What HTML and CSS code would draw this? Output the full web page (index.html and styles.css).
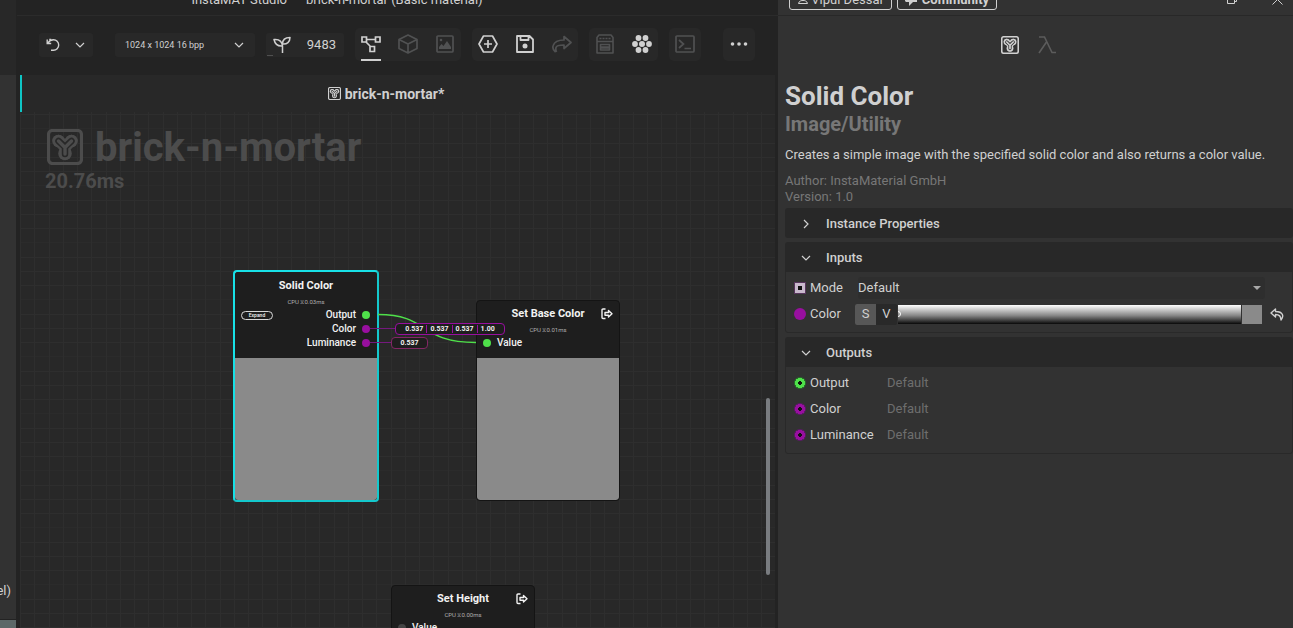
FILE: index.html
```html
<!DOCTYPE html>
<html lang="en">
<head>
<meta charset="utf-8">
<title>InstaMAT Studio</title>
<link rel="stylesheet" href="styles.css">
</head>
<body>
<svg class="defs" aria-hidden="true">
  <symbol id="logo" viewBox="0 0 36 36">
    <rect x="1.500" y="1.500" width="33" height="33" rx="4" fill="none" stroke="currentColor" stroke-width="3.200"/>
    <g fill="none" stroke-linecap="round" stroke-linejoin="round">
      <path d="M11.500 11.500L18 18L24.500 11.500M18 18V25" stroke="currentColor" stroke-width="11.500"/>
      <circle cx="11.500" cy="12" r="6.300" fill="currentColor"/>
      <circle cx="24.500" cy="12" r="6.300" fill="currentColor"/>
      <circle cx="18" cy="24.500" r="6.800" fill="currentColor"/>
      <path class="logo-gap" d="M11.500 12L18 18L24.500 12M18 18V25" stroke-width="6.500"/>
      <path d="M11.500 12L18 18.500L24.500 12M18 18V25" stroke="currentColor" stroke-width="3.400"/>
    </g>
  </symbol>
  <symbol id="chevron" viewBox="0 0 10 6"><path d="M1 1l4 4 4-4" fill="none" stroke="currentColor" stroke-width="1.200"/></symbol>
  <symbol id="export" viewBox="0 0 12 12"><path d="M4.500 1H2Q1 1 1 2v7.500q0 1 1 1h2.500M4 4.500h3.500V2.500L11 5.800 7.500 9V7.200H4z" fill="none" stroke="currentColor" stroke-width="1.400" stroke-linejoin="round"/></symbol>
</svg>
<div class="app">
  <aside class="side">
    <div class="side-top"></div>
    <div class="side-list"><span>(Pixel)</span></div>
    <div class="side-foot"></div>
  </aside>

  <main class="workspace">
    <header class="titlebar"><span>InstaMAT Studio</span><span>brick-n-mortar (Basic material)</span></header>
    <div class="toolbar">
      <div class="field undo">
        <button class="plain" aria-label="Undo"><svg width="14" height="14" viewBox="0 0 14 14" fill="none" stroke="currentColor" stroke-width="1.400"><path d="M1.200 1.500v4h4M5.200 1.500h-2M2 5C3.500 2.500 5 1.800 7.500 1.800a5.200 5.200 0 0 1 0 10.400H5"/></svg></button>
        <button class="plain" aria-label="Undo history"><svg width="10" height="6"><use href="#chevron"/></svg></button>
      </div>
      <button class="field resolution"><span>1024 x 1024 16 bpp</span><svg width="10" height="6"><use href="#chevron"/></svg></button>
      <label class="field seed">
        <svg width="18" height="18" viewBox="0 0 18 18" fill="none" stroke="currentColor" stroke-width="1.500" stroke-linejoin="round"><path d="M9.500 17V9.500M9.500 10C5 10.500 2 8 1 3.500 6 3 9 5.500 9.500 10zM9.500 8c0-4 2.500-6.500 7.500-6.500C17 6 14 8.500 9.500 8z"/></svg>
        <input value="9483" aria-label="Random seed">
      </label>
      <div class="group">
        <button class="tool active" aria-label="Graph"><svg width="20" height="18" viewBox="0 0 20 18" fill="none" stroke="currentColor" stroke-width="1.700"><path d="M1 2h4.500v5H1zM14.500 2H19v5h-4.500zM9 11.500h4.500v5H9zM5.500 4.500h9M5 7l5 5"/></svg></button>
        <button class="tool off" aria-label="3D view"><svg width="20" height="20" viewBox="0 0 20 20" fill="none" stroke="currentColor" stroke-width="1.700" stroke-linejoin="round"><path d="M10 1l9 4.500v9L10 19l-9-4.500v-9zM1 5.500L10 10l9-4.500M10 10v9"/></svg></button>
        <button class="tool off" aria-label="Image view"><svg width="18" height="18" viewBox="0 0 18 18" fill="none" stroke="currentColor" stroke-width="1.700"><rect x="1" y="1" width="16" height="16" rx="1"/><path d="M3 14v-2l2.500-3 2 2L11 6l4 6v2z" fill="currentColor" stroke="none"/><circle cx="5" cy="5" r="1.300" fill="currentColor" stroke="none"/></svg></button>
      </div>
      <div class="group">
        <button class="tool" aria-label="Add node"><svg width="20" height="18" viewBox="0 0 20 18" fill="none" stroke="currentColor" stroke-width="1.700" stroke-linejoin="round"><path d="M5.500 1h9L19 9l-4.500 8h-9L1 9zM10 5v8M6 9h8"/></svg></button>
        <button class="tool" aria-label="Save"><svg width="18" height="18" viewBox="0 0 18 18" fill="none" stroke="currentColor" stroke-width="1.800" stroke-linejoin="round"><path d="M1 1h12.500L17 4.500V17H1zM4.500 1v4h8V1"/><circle cx="9" cy="11" r="2.500" fill="currentColor" stroke="none"/></svg></button>
        <button class="tool off" aria-label="Share"><svg width="20" height="18" viewBox="0 0 20 18" fill="none" stroke="currentColor" stroke-width="1.700" stroke-linejoin="round"><path d="M3.500 17C1 15 .5 12.500 1.200 10.500 2.500 6.500 6 5 12 5V1.500L19 7.500l-7 6V10C7 10 4.500 10.500 4 12.500c-.5 2 0 3.500.5 4.500"/></svg></button>
      </div>
      <div class="group">
        <button class="tool off" aria-label="Library"><svg width="18" height="20" viewBox="0 0 18 20" fill="none" stroke="currentColor" stroke-width="1.600" stroke-linejoin="round"><path d="M1 19V3.500L3 1h12l2 2.500V19zM1 7.500h16"/><path d="M3.500 4.500h11" stroke-dasharray="2 1"/><rect x="4.500" y="10.500" width="9" height="5.500"/><path d="M5 13.500h8" stroke-width="2.500"/></svg></button>
        <button class="tool" aria-label="Color nodes"><svg width="20" height="18" viewBox="0 0 20 18" fill="currentColor"><circle cx="6.500" cy="3" r="2.900"/><circle cx="13.500" cy="3" r="2.900"/><circle cx="3" cy="9" r="2.900"/><circle cx="10" cy="9" r="3"/><circle cx="17" cy="9" r="2.900"/><circle cx="6.500" cy="15" r="2.900"/><circle cx="13.500" cy="15" r="2.900"/></svg></button>
      </div>
      <div class="group">
        <button class="tool off" aria-label="Console"><svg width="20" height="18" viewBox="0 0 20 18" fill="none" stroke="currentColor" stroke-width="1.700"><rect x="1" y="1" width="18" height="16" rx="1"/><path d="M4 5l4.500 4L4 13M9.500 13.500H16"/></svg></button>
      </div>
      <div class="group more">
        <button class="tool" aria-label="More"><svg width="18" height="4" viewBox="0 0 18 4" fill="currentColor"><circle cx="2.500" cy="2" r="1.800"/><circle cx="9" cy="2" r="1.800"/><circle cx="15.500" cy="2" r="1.800"/></svg></button>
      </div>
    </div>
    <div class="tab"><svg class="on-tab" width="13" height="13"><use href="#logo"/></svg><span>brick-n-mortar*</span></div>

    <section class="canvas">
      <div class="project">
        <h1><svg class="on-canvas" width="36" height="36"><use href="#logo"/></svg><span>brick-n-mortar</span></h1>
        <p>20.76ms</p>
      </div>

      <article class="node selected n-solid">
        <h2>Solid Color</h2>
        <p class="cpu">CPU ⧖0.03ms</p>
        <div class="ports">
          <button class="expand">Expand</button>
          <ul class="out">
            <li>Output<i class="pin green"></i></li>
            <li>Color<i class="pin"></i></li>
            <li>Luminance<i class="pin"></i></li>
          </ul>
        </div>
        <div class="preview"></div>
      </article>

      <article class="node n-base">
        <h2>Set Base Color</h2>
        <svg class="export" width="12" height="12"><use href="#export"/></svg>
        <p class="cpu">CPU ⧖0.01ms</p>
        <ul class="in"><li><i class="pin green"></i>Value</li></ul>
        <div class="preview"></div>
      </article>

      <article class="node n-height">
        <h2>Set Height</h2>
        <svg class="export" width="12" height="12"><use href="#export"/></svg>
        <p class="cpu">CPU ⧖0.00ms</p>
        <ul class="in"><li><i class="pin idle"></i>Value</li></ul>
      </article>

      <svg class="wires" width="140" height="50" viewBox="0 0 140 50" fill="none">
        <path d="M0 18.500H26M0 32.500H22" stroke="#75197e"/>
        <path d="M8 4.500C60 4.500 48 32.500 106 32.500" stroke="#4fe04a" stroke-width="1.500"/>
      </svg>
      <div class="value v-color"><span>0.537</span><span>0.537</span><span>0.537</span><span>1.00</span></div>
      <div class="value v-lum"><span>0.537</span></div>
      <div class="scroll-thumb"></div>
    </section>
  </main>

  <aside class="inspector">
    <header class="account">
      <button><svg width="10" height="9" viewBox="0 0 10 9" fill="none" stroke="currentColor"><circle cx="5" cy="3" r="2.500"/><path d="M.5 8.500C1 6 3 5.500 5 5.500s4 .5 4.500 3z"/></svg>Vipul Dessai</button>
      <button class="community"><svg width="12" height="12" viewBox="0 0 12 12" fill="currentColor"><path d="M1 0h10a1 1 0 0 1 1 1v7H8l-4 4V8H1L0 7V1z"/></svg>Community</button>
      <span class="window-controls">
        <svg width="10" height="10" viewBox="0 0 10 10" fill="none" stroke="currentColor"><path d="M.5 2.500h7v7h-7zM2.500 2.500v-2h7v7h-2"/></svg>
        <svg width="11" height="11" viewBox="0 0 11 11" fill="none" stroke="currentColor"><path d="M.5.5l10 10M10.500.5l-10 10"/></svg>
      </span>
    </header>
    <nav class="modes">
      <button class="plain" aria-label="Graph properties"><svg class="on-panel" width="18" height="18"><use href="#logo"/></svg></button>
      <button class="plain dim" aria-label="Functions"><svg width="18" height="18" viewBox="0 0 18 18" fill="none" stroke="currentColor" stroke-width="1.600"><path d="M1 1h5.500L14 16.500h4M8.500 6L1 17"/></svg></button>
    </nav>
    <div class="about">
      <h2>Solid Color</h2>
      <h3>Image/Utility</h3>
      <p>Creates a simple image with the specified solid color and also returns a color value.</p>
      <p class="meta">Author: InstaMaterial GmbH<br>Version: 1.0</p>
    </div>
    <section class="card">
      <button class="card-head closed"><svg width="10" height="6"><use href="#chevron"/></svg>Instance Properties</button>
    </section>
    <section class="card">
      <button class="card-head"><svg width="10" height="6"><use href="#chevron"/></svg>Inputs</button>
      <div class="card-body inputs">
        <div class="row mode">
          <i class="square"></i><label for="mode">Mode</label>
          <div class="select">
            <select id="mode"><option>Default</option></select>
            <svg width="8" height="4" viewBox="0 0 8 4"><path d="M0 0h8L4 4z" fill="#a8a8a8"/></svg>
          </div>
        </div>
        <div class="row">
          <i class="port solid"></i><span class="label">Color</span>
          <div class="toggle"><button class="on">S</button><button>V</button></div>
          <div class="ramp"><i></i></div>
          <div class="swatch"></div>
          <button class="plain reset" aria-label="Reset"><svg width="14" height="13" viewBox="0 0 14 13" fill="none" stroke="currentColor" stroke-width="1.400" stroke-linejoin="round"><path d="M5.500 1L1 5l4.500 4V6.500C9 6.500 11 7.500 11 12c3-3.500 2.500-8.500-5.500-8.500z"/></svg></button>
        </div>
      </div>
    </section>
    <section class="card">
      <button class="card-head"><svg width="10" height="6"><use href="#chevron"/></svg>Outputs</button>
      <div class="card-body">
        <div class="row"><i class="port green"></i><span class="label wide">Output</span><span class="default">Default</span></div>
        <div class="row"><i class="port"></i><span class="label wide">Color</span><span class="default">Default</span></div>
        <div class="row"><i class="port"></i><span class="label wide">Luminance</span><span class="default">Default</span></div>
      </div>
    </section>
  </aside>
</div>
</body>
</html>
```
FILE: styles.css
```css
* { box-sizing: border-box; }
body { margin: 0; background: #232323; color: #d0d0d0; font: 13px/16px Roboto, "Noto Sans", sans-serif; overflow: hidden; }
h1, h2, h3, p, ul { margin: 0; padding: 0; list-style: none; }
button, input, select { font: inherit; color: inherit; background: none; border: 0; padding: 0; margin: 0; }
svg { display: block; flex: none; }
.defs { position: absolute; width: 0; height: 0; }
.plain { display: flex; align-items: center; justify-content: center; }
.app { display: flex; height: 100vh; }

.side { width: 16px; display: flex; flex-direction: column; margin-right: 1px; }
.side-top { height: 75px; background: #282828; }
.side-list { flex: 1; background: #323232; display: flex; align-items: flex-end; justify-content: flex-end; padding: 0 5px 20px 0; overflow: hidden; }
.side-foot { height: 8px; margin-top: 1px; background: #5c6868; }

.workspace { flex: 1; min-width: 0; display: flex; flex-direction: column; }
.titlebar { height: 16px; border-bottom: 1px solid #2b2b2b; padding: 0 121px 7px 0; display: flex; gap: 19px; align-items: flex-end; justify-content: center; overflow: hidden; }
.toolbar { height: 59px; padding: 0 22px 2px; display: flex; align-items: center; gap: 11px; }
.field { height: 24px; background: #282828; border-radius: 3px; display: flex; align-items: center; }
.undo { width: 54px; padding: 0 8px 0 7px; justify-content: space-between; margin-right: 11px; }
.resolution { width: 140px; padding: 0 11px 0 10px; justify-content: space-between; font-size: 9px; }
.seed { width: 78px; padding: 0 8px 0 7px; justify-content: space-between; background: linear-gradient(#505050, #505050) 1px 22px / 6px 1px no-repeat #282828; }
.seed input { width: 30px; text-align: right; }
.group { height: 33px; background: #282828; border-radius: 5px; display: flex; gap: 5px; }
.more { margin-left: 11px; }
.tool { width: 32px; height: 33px; display: flex; align-items: center; justify-content: center; border-bottom: 2px solid transparent; }
.tool.active { background: linear-gradient(#d0d0d0, #d0d0d0) 6px 31px / 20px 2px no-repeat border-box; }
.tool.off { color: #505152; }
.tab { height: 37px; margin: 0 3px; background: #282828; border-left: 2px solid #0ec5c5; display: flex; align-items: center; justify-content: center; gap: 4px; font-size: 14px; font-weight: 700; padding-right: 25px; }
.on-tab, .on-canvas { --gap: #282828; }
.on-panel { --gap: #323232; }
.logo-gap { stroke: var(--gap); }

.canvas { flex: 1; position: relative; overflow: hidden; margin: 0 3px; background-color: #282828;
  background-image:
    linear-gradient(90deg, #2e2e2e 1px, #0000 1px 14px, #2e2e2e 14px 15px, #0000 15px 29px, #2e2e2e 29px 30px, #0000 30px 43px, #2e2e2e 43px 44px, #0000 44px),
    linear-gradient(#2e2e2e 1px, #0000 1px 14px, #2b2b2b 14px 15px, #0000 15px 29px, #2e2e2e 29px 30px, #0000 30px 43px, #2e2e2e 43px 44px, #0000 44px);
  background-size: 57px 57px; background-position: 0 2px; }
.project { padding: 10px 25px; color: #4c4c4c; font-weight: 700; }
.project h1 { display: flex; align-items: center; gap: 12px; font-size: 40px; line-height: 48px; padding-left: 2px; }
.project h1 span { padding-top: 2px; }
.project p { font-size: 20px; line-height: 18px; }
.node { position: absolute; width: 144px; background: #1e1e1e; border: 1px solid #141414; border-radius: 4px; overflow: hidden; color: #f2f2f2; font-size: 11px; line-height: 14px; font-weight: 500; }
.node h2 { font-size: 11px; line-height: 14px; font-weight: 700; text-align: center; padding-top: 6px; }
.node.selected { width: 146px; border: 2px solid #14c8cc; border-top-color: #18e0e6; border-left-color: #18e0e6; }
.node.selected h2 { padding-top: 7px; }
.cpu { font-size: 6px; line-height: 8px; font-weight: 400; text-align: center; color: #b0b0b0; padding-top: 5px; }
.export { position: absolute; right: 6px; top: 7px; }
.n-solid { left: 213px; top: 158px; }
.n-base { left: 456px; top: 188px; }
.n-height { left: 371px; top: 473px; height: 100px; }
.ports { display: flex; justify-content: space-between; padding: 2px 7px 8px 6px; font-size: 10px; }
.expand { width: 32px; height: 9px; margin-top: 3px; border: 1px solid #d8d8d8; border-radius: 5px; font-size: 5px; line-height: 5px; }
.out li, .in li { display: flex; align-items: center; justify-content: flex-end; gap: 6px; height: 14px; }
.in li { justify-content: flex-start; }
.in { padding: 2px 6px 8px; font-size: 10px; }
.pin { width: 8px; height: 8px; border-radius: 4px; background: #980f9f; }
.green { background: #4fe04a; }
.idle { background: #444; }
.preview { height: 142px; background: #8a8a8a; border-radius: 0 0 3px 3px; }
.wires { position: absolute; left: 350px; top: 198px; }
.value { position: absolute; height: 12px; display: flex; align-items: center; justify-content: center; background: #1e1e1e; border: 1px solid #980f9f; border-radius: 4px; color: #f2f2f2; font-size: 7px; line-height: 8px; font-weight: 700; }
.value span + span { border-left: 1px solid #980f9f; margin-left: 3px; padding-left: 3px; }
.v-color { left: 375px; top: 211px; width: 110px; }
.v-lum { left: 371px; top: 225px; width: 37px; border-color: #822764; }
.scroll-thumb { position: absolute; right: 5px; top: 286px; width: 4px; height: 177px; border-radius: 2px; background: #797c80; }

.inspector { width: 515px; background: #323232; padding-left: 7px; }
.account { height: 16px; margin-left: -7px; padding: 0 10px 5px 11px; border-bottom: 1px solid #282828; display: flex; align-items: flex-end; gap: 5px; overflow: hidden; }
.account button { width: 103px; height: 24px; flex: none; border: 1px solid #d0d0d0; border-radius: 3px; display: flex; align-items: center; justify-content: center; gap: 3px; padding-top: 3px; }
.account .community { width: 100px; font-weight: 700; gap: 5px; }
.window-controls { margin-left: auto; display: flex; align-items: center; gap: 35px; height: 12px; margin-bottom: 5px; }
.modes { height: 58px; display: flex; justify-content: center; align-items: center; gap: 19px; padding-right: 21px; }
.dim { color: #5c5c5c; }
.about { height: 134px; padding-top: 7px; }
.about h2 { font-size: 26px; line-height: 30px; }
.about h3 { font-size: 20px; line-height: 26px; color: #777; }
.about p { padding-top: 10px; }
.about .meta { color: #777; }
.card { margin-bottom: 4px; border-radius: 3px; overflow: hidden; }
.card-head { width: 100%; height: 30px; background: #282828; display: flex; align-items: center; gap: 15px; padding: 2px 0 0 16px; font-weight: 500; }
.closed svg { transform: rotate(-90deg); }
.card-body { border: 1px solid #292929; border-top: 0; border-radius: 0 0 3px 3px; padding: 3px 8px 5px; }
.row { height: 26px; display: flex; align-items: center; }
.row label { width: 48px; margin-left: 5px; }
.label { width: 45px; margin-left: 4px; }
.wide { width: 77px; }
.default { color: #6e6e6e; }
.square { width: 10px; height: 10px; margin-left: 1px; background: #111; border: 3px solid #c8b8cc; outline: 1px solid #57355c; }
.select { flex: 1; height: 22px; margin-right: 19px; padding-right: 4px; display: flex; align-items: center; border-radius: 3px; background: #2e2e2e; }
.select select { flex: 1; height: 22px; appearance: none; }
.port { width: 12px; height: 12px; border-radius: 6px; background: radial-gradient(circle, #111 2px, #980f9f 2px 5px, #5d1868 5px); }
.port.green { background: radial-gradient(circle, #111 2px, #4fe04a 2px 5px, #27702a 5px); }
.port.solid { background: #980f9f; }
.toggle { display: flex; height: 21px; background: #292929; border-radius: 2px; }
.toggle button { width: 21px; }
.toggle .on { background: #575757; border-radius: 2px 0 0 2px; }
.ramp { flex: 1; height: 19px; margin-left: 1px; background: linear-gradient(#fff, #888 55%, #080808); overflow: hidden; display: flex; align-items: center; }
.ramp i { width: 6px; height: 6px; margin-left: -3px; border: 1px solid #fff; border-radius: 3px; }
.swatch { width: 20px; height: 19px; margin: 0 8px 0 1px; background: #8a8a8a; }
```
